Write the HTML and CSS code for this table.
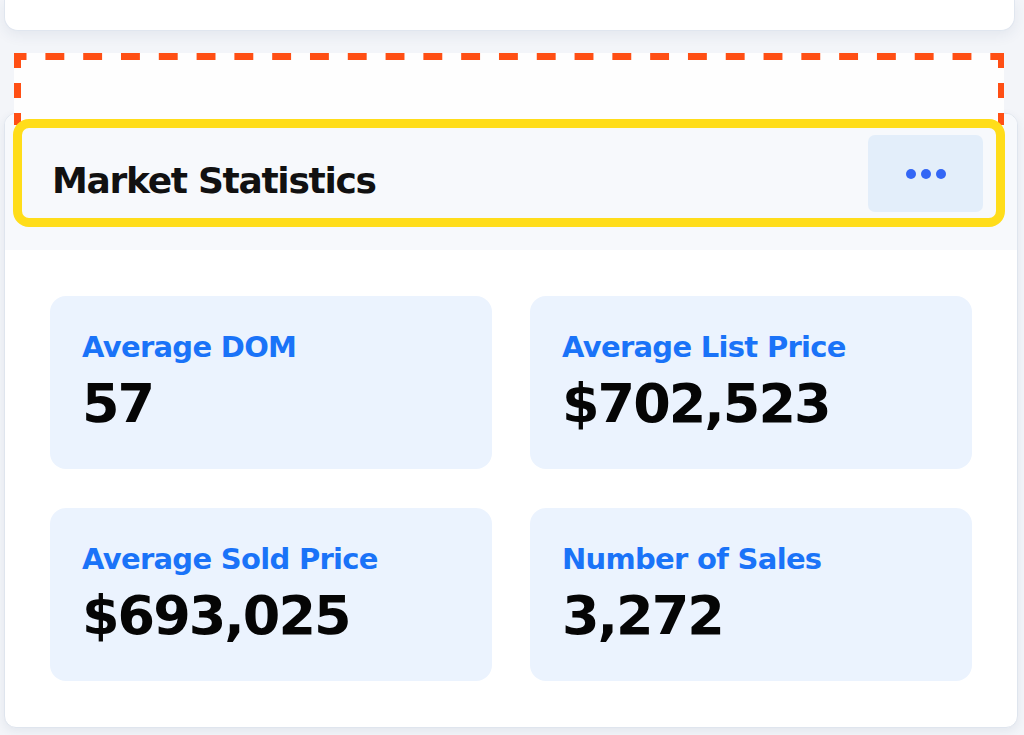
FILE: index.html
```html
<!DOCTYPE html>
<html lang="en">
<head>
<meta charset="utf-8">
<title>Market Statistics</title>
<link rel="stylesheet" href="styles.css">
</head>
<body>
<div class="page">
  <div class="top-card"></div>
  <div class="drop-zone"></div>
  <section class="card">
    <header class="card-header">
      <div class="header-row">
        <h2 class="title">Market Statistics</h2>
        <button class="more" type="button" aria-label="More options"><span class="dot"></span><span class="dot"></span><span class="dot"></span></button>
      </div>
    </header>
    <div class="stats">
      <div class="stat">
        <div class="label">Average DOM</div>
        <div class="value">57</div>
      </div>
      <div class="stat">
        <div class="label">Average List Price</div>
        <div class="value">$702,523</div>
      </div>
      <div class="stat">
        <div class="label">Average Sold Price</div>
        <div class="value">$693,025</div>
      </div>
      <div class="stat">
        <div class="label">Number of Sales</div>
        <div class="value">3,272</div>
      </div>
    </div>
  </section>
</div>
</body>
</html>
```

FILE: styles.css
```css
html, body {
  margin: 0;
  padding: 0;
  background: #f3f5f9;
  font-family: "DejaVu Sans", "Liberation Sans", sans-serif;
}

.page {
  position: relative;
  height: 735px;
  padding: 0 6px 0 4px;
  box-sizing: border-box;
  overflow: hidden;
}

.top-card {
  height: 31px;
  margin-right: 3px;
  background: #ffffff;
  border: 1px solid #e0e6ef;
  border-top: none;
  border-radius: 0 0 14px 14px;
  box-sizing: border-box;
  box-shadow: 0 4px 14px rgba(40, 60, 100, 0.08);
}

/* drop indicator: dashed outline drawn with gradient strips */
.drop-zone {
  position: absolute;
  left: 14px;
  top: 53px;
  width: 990px;
  height: 72px;
  z-index: 1;
  background-color: #fefefe;
  background-image:
    linear-gradient(90deg, #ff4f14 0 19px, transparent 19px),
    linear-gradient(180deg, #ff4f14 0 15.5px, transparent 15.5px),
    linear-gradient(180deg, #ff4f14 0 15.5px, transparent 15.5px);
  background-size: 37.8px 6.5px, 6.5px 30px, 6.5px 30px;
  background-position: -6.4px 0, 0 0, right 0 top 0;
  background-repeat: repeat-x, repeat-y, repeat-y;
}

.card {
  margin-top: 82px;
  background: #ffffff;
  border: 1px solid #dfe5ee;
  border-radius: 12px;
  box-shadow: 0 3px 10px rgba(40, 60, 100, 0.08);
}

.card-header {
  background: #f7f9fc;
  border-radius: 11px 11px 0 0;
  padding: 5px 12px 23px 8px;
}

.header-row {
  position: relative;
  z-index: 2;
  height: 108px;
  box-sizing: border-box;
  border: 9px solid #ffdd1a;
  border-radius: 16px;
  background: #f7f9fc;
  display: flex;
  align-items: center;
  justify-content: space-between;
  padding: 0 13px 0 30px;
}

.title {
  margin: 0;
  padding-top: 16px;
  font-size: 36px;
  line-height: 44px;
  letter-spacing: -1.3px;
  font-weight: 700;
  color: #111111;
}

.more {
  width: 115px;
  height: 77px;
  border: none;
  border-radius: 7px;
  background: #e3eefa;
  display: flex;
  align-items: center;
  justify-content: center;
  gap: 5px;
  padding: 0;
  margin-top: 1px;
}

.dot {
  width: 10px;
  height: 10px;
  border-radius: 50%;
  background: #3366f5;
}

.stats {
  display: grid;
  grid-template-columns: 1fr 1fr;
  column-gap: 38px;
  row-gap: 39px;
  padding: 46px 45px 46px 45px;
}

.stat {
  background: #ebf3fe;
  border-radius: 16px;
  padding: 34px 30px 35px 32px;
}

.label {
  font-size: 29px;
  line-height: 34px;
  letter-spacing: -0.7px;
  font-weight: 700;
  color: #1a73f8;
  white-space: nowrap;
}

.value {
  margin-top: 10px;
  font-size: 54px;
  line-height: 60px;
  letter-spacing: -2px;
  font-weight: 700;
  color: #050505;
  white-space: nowrap;
}
```
